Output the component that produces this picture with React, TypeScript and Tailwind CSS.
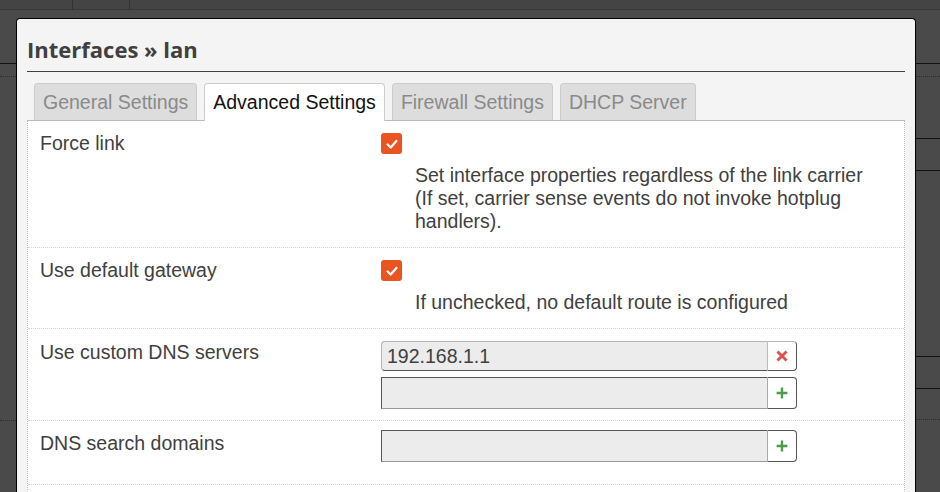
import React from 'react'

const sans = "font-['Liberation_Sans',Arial,sans-serif]"

function Check() {
  return (
    <span className="flex h-[21px] w-[21px] items-center justify-center rounded-[3px] bg-[#e95420]">
      <svg width="14" height="14" viewBox="0 0 16 16" fill="none">
        <polyline points="3,8.5 6.5,12 13,4.5" stroke="#fff" strokeWidth="2.6" strokeLinecap="round" strokeLinejoin="round" />
      </svg>
    </span>
  )
}

function RemoveIcon() {
  return (
    <svg width="12" height="12" viewBox="0 0 10 10">
      <path d="M1.2 1.2 L8.8 8.8 M8.8 1.2 L1.2 8.8" stroke="#d9534f" strokeWidth="2.4" />
    </svg>
  )
}

function AddIcon() {
  return (
    <svg width="12" height="12" viewBox="0 0 10 10">
      <path d="M5 0.5 V9.5 M0.5 5 H9.5" stroke="#4a9d4a" strokeWidth="2" />
    </svg>
  )
}

function DynInput({ value, remove, tall }: { value?: string; remove?: boolean; tall?: boolean }) {
  return (
    <div className={`flex w-[416px] ${tall ? 'h-[32px]' : 'h-[30px]'}`}>
      <div
        className={
          remove
            ? 'flex flex-1 items-center rounded-l-[4px] border-t border-l border-b border-t-[#b5b5b5] border-l-[#b5b5b5] border-b-[#555] bg-[#ececec] px-[5px] text-[#404040]'
            : 'flex flex-1 items-center border-t border-l border-b border-t-[#555] border-l-[#555] border-b-[#999] bg-[#ececec] px-[5px] text-[#404040]'
        }
      >
        {value}
      </div>
      <div
        className={
          remove
            ? 'flex w-[30px] items-center justify-center rounded-r-[4px] border border-l-[#bbb] border-t-[#b5b5b5] border-r-[#555] border-b-[#555] bg-white'
            : 'flex w-[30px] items-center justify-center rounded-r-[4px] border border-l-[#aaa] border-t-[#555] border-r-[#555] border-b-[#555] bg-white'
        }
      >
        {remove ? <RemoveIcon /> : <AddIcon />}
      </div>
    </div>
  )
}

function Tab({ label, active }: { label: string; active?: boolean }) {
  return active ? (
    <div className="relative z-10 -mb-px flex h-[38px] items-center rounded-t-[4px] border border-b-0 border-[#ccc] bg-white px-[8px] pb-px text-[#111]">
      {label}
    </div>
  ) : (
    <div className="flex h-[37px] items-center rounded-t-[4px] border border-b-0 border-[#ccc] bg-[#ddd] px-[8px] text-[#8a8a8a]">
      {label}
    </div>
  )
}

function Backdrop() {
  const col = (extra: boolean) => (
    <div className="flex flex-col">
      <div className="h-[10px] border-b border-[#383838] bg-[#444]" />
      <div className="h-[54px] border-b border-[#111]" />
      <div className="h-[13px] border-b border-dotted border-[#2c2c2c]" />
      {extra ? (
        <>
          <div className="h-[62px] border-b border-[#111]" />
          <div className="h-[32px] border-b border-[#111]" />
          <div className="h-[186px] border-b border-[#111]" />
          <div className="h-[32px] border-b border-[#111]" />
          <div className="h-[31px] border-b border-dotted border-[#2c2c2c]" />
        </>
      ) : (
        <div className="h-[344px] border-b border-dotted border-[#2c2c2c]" />
      )}
    </div>
  )
  return (
    <div className="flex h-[492px] w-[940px] bg-[#4a4a4a]">
      <div className="relative flex-1">
        {col(false)}
        <div className="absolute top-0 left-[72px] h-[10px] border-l border-[#333]" />
        <div className="absolute top-0 left-[129px] h-[10px] border-l border-[#333]" />
      </div>
      <div className="w-[24px]">{col(true)}</div>
    </div>
  )
}

export default function App() {
  return (
    <div className={`relative h-[492px] w-[940px] overflow-hidden ${sans} text-[19.5px] leading-[23px] text-[#404040]`}>
      <Backdrop />

      <div className="absolute top-[18px] left-[16px] h-[500px] w-[900px] rounded-t-[4px] border-x border-t border-black bg-[#f4f4f4] px-[10px]">
        <h2 className="border-b border-[#404040] pt-[16px] pb-[8px] font-['Open_Sans',sans-serif] text-[22px] leading-[28px] font-bold text-[#404040]">
          Interfaces » lan
        </h2>

        <div className="mt-[11px] flex gap-[7px] pl-[7px]">
          <Tab label="General Settings" />
          <Tab label="Advanced Settings" active />
          <Tab label="Firewall Settings" />
          <Tab label="DHCP Server" />
        </div>

        <div className="h-[400px] border-x border-t border-x-[#bbb] border-t-[#bbb] border-dotted bg-white [border-top-style:solid]">
          <div className="flex border-b border-dotted border-[#d5d5d5] pt-[11px] pb-[14px] pl-[12px]">
            <div className="w-[341px]">Force link</div>
            <div>
              <div className="flex h-[23px] items-center">
                <Check />
              </div>
              <div className="mt-[9px] w-[495px] pl-[34px]">
                Set interface properties regardless of the link carrier (If set, carrier sense events do not invoke hotplug handlers).
              </div>
            </div>
          </div>

          <div className="flex border-b border-dotted border-[#d5d5d5] pt-[11px] pb-[14px] pl-[12px]">
            <div className="w-[341px]">Use default gateway</div>
            <div>
              <div className="flex h-[23px] items-center">
                <Check />
              </div>
              <div className="mt-[9px] pl-[34px]">If unchecked, no default route is configured</div>
            </div>
          </div>

          <div className="flex border-b border-dotted border-[#d5d5d5] pt-[12px] pb-[11px] pl-[12px]">
            <div className="w-[341px]">Use custom DNS servers</div>
            <div className="flex flex-col gap-[6px]">
              <DynInput value="192.168.1.1" remove />
              <DynInput tall />
            </div>
          </div>

          <div className="flex border-b border-dotted border-[#d5d5d5] pt-[9px] pb-[22px] pl-[12px]">
            <div className="w-[341px] pt-[2px]">DNS search domains</div>
            <DynInput tall />
          </div>

          <div className="h-[40px]" />
        </div>
      </div>
    </div>
  )
}
